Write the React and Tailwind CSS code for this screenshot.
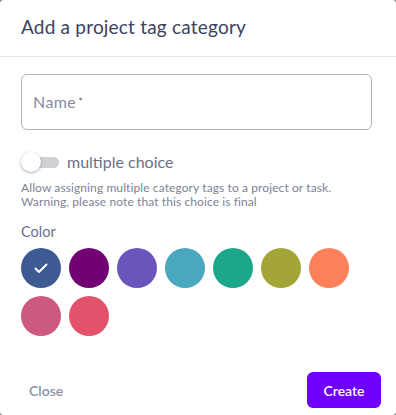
import { useState } from "react";

const colors = [
  "#3d5a93",
  "#720073",
  "#6c54bd",
  "#4aa7c0",
  "#1aa78a",
  "#a3a537",
  "#fe8159",
  "#cd5a7e",
  "#e2526a",
];

export default function App() {
  const [selected, setSelected] = useState(0);
  const [multi, setMulti] = useState(false);

  return (
    <div className="w-[396px] h-[415px] bg-[#8c8c8c]" style={{ fontFamily: "Lato, 'Noto Sans', sans-serif" }}>
      <div className="w-full h-full bg-white rounded-[4px] flex flex-col">
        {/* Header */}
        <div className="h-[57px] border-b border-[#e3e4e8] px-[21px] flex items-center">
          <h2 className="text-[19px] text-[#3b4262] tracking-[0.2px] pb-[1px]">Add a project tag category</h2>
        </div>

        {/* Body */}
        <div className="pl-[21px] pr-[24px] pt-[17px] flex-1">
          <div className="h-[56px] border border-[#b3b5bd] rounded-[6px] flex items-center px-[11px]">
            <span className="text-[16px] tracking-[0.4px] text-[#858b9e]">
              Name<sup className="text-[11px] ml-[2px] relative -top-[2px] text-[#6b7186]">*</sup>
            </span>
          </div>

          <button
            className="mt-[22px] flex items-center gap-[8px]"
            onClick={() => setMulti(!multi)}
          >
            <span className="relative w-[38px] h-[20px] flex items-center">
              <span className={`ml-[2px] w-[36px] h-[11px] rounded-full ${multi ? "bg-[#b38cff]" : "bg-[#cfd1d6]"}`} />
              <span
                className={`absolute top-0 w-[20px] h-[20px] rounded-full bg-white shadow-[0_1px_3px_rgba(0,0,0,0.35)] ${
                  multi ? "left-[18px]" : "left-0"
                }`}
              />
            </span>
            <span className="text-[16px] leading-[20px] text-[#6b7186]">multiple choice</span>
          </button>

          <p className="mt-[9px] text-[12px] leading-[14px] tracking-[0.1px] text-[#7d8294]">
            Allow assigning multiple category tags to a project or task.
            <br />
            Warning, please note that this choice is final
          </p>

          <p className="mt-[14px] text-[14.5px] leading-[18px] text-[#6b7186]">Color</p>

          <div className="mt-[7px] flex flex-wrap gap-[8px] w-[340px]">
            {colors.map((c, i) => (
              <button
                key={c}
                onClick={() => setSelected(i)}
                className="w-[40px] h-[40px] rounded-full flex items-center justify-center"
                style={{ backgroundColor: c }}
              >
                {selected === i && (
                  <svg width="14" height="11" viewBox="0 0 14 11" fill="none">
                    <path d="M1.5 5.5 L5 9 L12.5 1.5" stroke="white" strokeWidth="2" strokeLinecap="round" strokeLinejoin="round" />
                  </svg>
                )}
              </button>
            ))}
          </div>
        </div>

        {/* Footer */}
        <div className="flex items-center justify-between pl-[29px] pr-[15px] pb-[7px]">
          <button className="text-[14px] font-semibold text-[#8a90a2]">Close</button>
          <button className="w-[74px] h-[36px] rounded-[6px] bg-[#7000fe] text-white text-[14px] font-semibold">
            Create
          </button>
        </div>
      </div>
    </div>
  );
}
